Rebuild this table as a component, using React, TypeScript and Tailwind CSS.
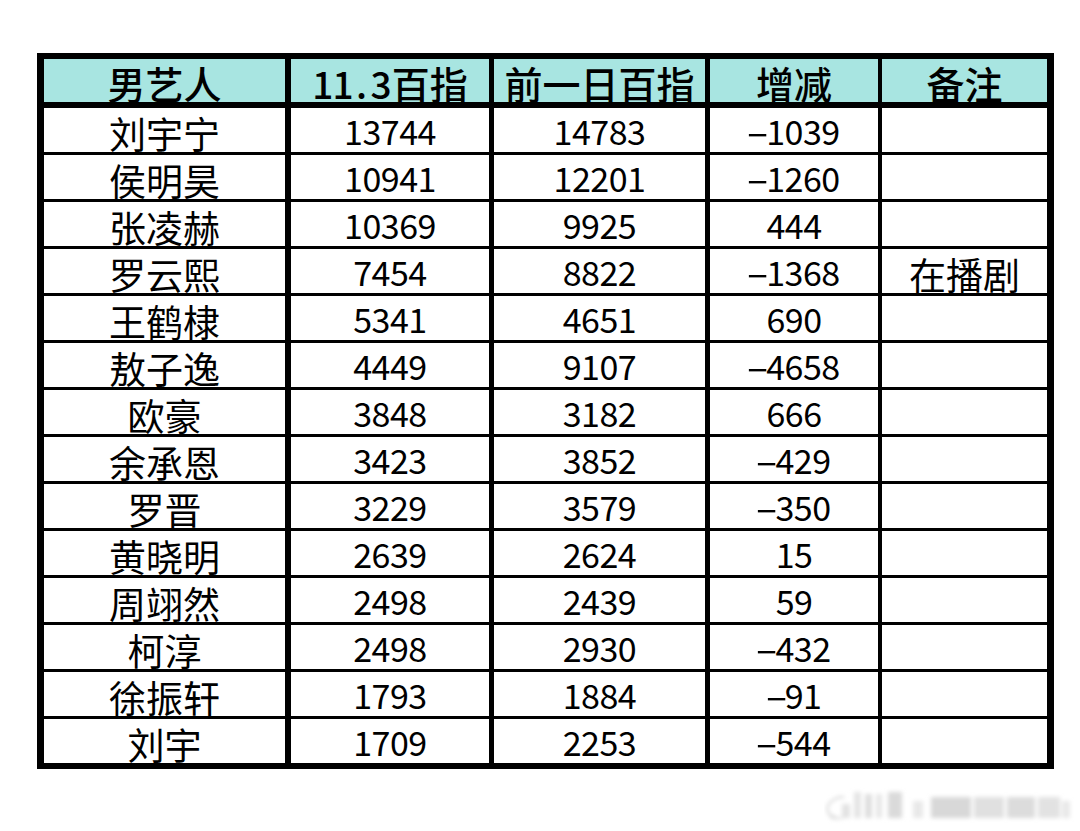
import React from "react";

const rows: [string, string, string, string, string][] = [
  ["刘宇宁", "13744", "14783", "-1039", ""],
  ["侯明昊", "10941", "12201", "-1260", ""],
  ["张凌赫", "10369", "9925", "444", ""],
  ["罗云熙", "7454", "8822", "-1368", "在播剧"],
  ["王鹤棣", "5341", "4651", "690", ""],
  ["敖子逸", "4449", "9107", "-4658", ""],
  ["欧豪", "3848", "3182", "666", ""],
  ["余承恩", "3423", "3852", "-429", ""],
  ["罗晋", "3229", "3579", "-350", ""],
  ["黄晓明", "2639", "2624", "15", ""],
  ["周翊然", "2498", "2439", "59", ""],
  ["柯淳", "2498", "2930", "-432", ""],
  ["徐振轩", "1793", "1884", "-91", ""],
  ["刘宇", "1709", "2253", "-544", ""],
];

const font = { fontFamily: '"Noto Sans CJK SC", "Noto Sans", sans-serif' };

function Num({ v }: { v: string }) {
  if (v.startsWith("-")) {
    return (
      <span>
        <span className="inline-block w-[18px] text-center scale-x-[2]">-</span>
        {v.slice(1)}
      </span>
    );
  }
  return <span>{v}</span>;
}

function Watermark() {
  return (
    <svg width="250" height="40" viewBox="0 0 250 40" className="block">
      <defs>
        <filter id="wb" x="-10%" y="-30%" width="120%" height="160%">
          <feGaussianBlur stdDeviation="2" />
        </filter>
      </defs>
      <g filter="url(#wb)">
        <path d="M12 33 C2 32 1 22 8 17 C13 13 18 12 20 14" fill="none" stroke="#d8d8d8" strokeWidth="2" />
        <path d="M6 33 C14 36 22 34 24 28" fill="none" stroke="#dcdcdc" strokeWidth="2" />
        <rect x="18" y="20" width="8" height="14" fill="#e2e2e2" />
        <rect x="30" y="8" width="7" height="26" fill="#e4e4e4" />
        <rect x="41" y="10" width="7" height="24" fill="#dedede" />
        <rect x="52" y="10" width="6" height="24" fill="#e6e6e6" />
        <rect x="64" y="8" width="14" height="26" fill="#dadada" />
        <rect x="89" y="17" width="10" height="17" fill="#e8e8e8" />
        <rect x="107" y="13" width="40" height="21" fill="#d8d8d8" />
        <rect x="150" y="13" width="30" height="21" fill="#e0e0e0" />
        <rect x="183" y="13" width="28" height="21" fill="#dcdcdc" />
        <rect x="214" y="13" width="22" height="21" fill="#e2e2e2" />
        <rect x="238" y="17" width="8" height="17" fill="#e8e8e8" />
      </g>
    </svg>
  );
}

export default function App() {
  const cellBase = "overflow-hidden text-center leading-none text-black shrink-0";
  return (
    <div className="w-[1080px] h-[831px] bg-white relative" style={font}>
      <div className="pt-[53px] pl-[37px]">
        <div className="w-[1017px] border-x-[7px] border-y-[6px] border-black bg-white">
          {/* header */}
          <div className="flex h-[49px] bg-[#a8e5e1] border-b-[6px] border-black font-medium text-[38px]">
            <div className={`${cellBase} w-[247px] border-r-[6px] border-black pt-[5px]`}>男艺人</div>
            <div className={`${cellBase} w-[203px] border-r-[5px] border-black pt-[5px]`}>
              <span className="text-[37px] tracking-[-1px]">11</span>
              <span className="inline-block w-[18px] text-center text-[37px]">.</span>
              <span className="text-[37px]">3</span>百指
            </div>
            <div className={`${cellBase} w-[216px] border-r-[5px] border-black pt-[5px]`}>前一日百指</div>
            <div className={`${cellBase} w-[172px] border-r-[4px] border-black pt-[5px]`}>增减</div>
            <div className={`${cellBase} flex-1 pt-[5px]`}>备注</div>
          </div>
          {rows.map((r, i) => (
            <div
              key={i}
              className={
                i === rows.length - 1
                  ? "flex h-[44px]"
                  : "flex h-[47px] border-b-[3px] border-black"
              }
            >
              <div className={`${cellBase} w-[247px] border-r-[6px] border-black pt-[7px] text-[37px]`}>{r[0]}</div>
              <div className={`${cellBase} w-[203px] border-r-[5px] border-black pt-[6px] text-[34px] tracking-[-0.5px]`}>
                <Num v={r[1]} />
              </div>
              <div className={`${cellBase} w-[216px] border-r-[5px] border-black pt-[6px] text-[34px] tracking-[-0.5px]`}>
                <Num v={r[2]} />
              </div>
              <div className={`${cellBase} w-[172px] border-r-[4px] border-black pt-[6px] text-[34px] tracking-[-0.5px]`}>
                <Num v={r[3]} />
              </div>
              <div className={`${cellBase} flex-1 pt-[7px] text-[37px]`}>{r[4]}</div>
            </div>
          ))}
        </div>
      </div>
      <div className="absolute left-[824px] top-[784px]">
        <Watermark />
      </div>
    </div>
  );
}
